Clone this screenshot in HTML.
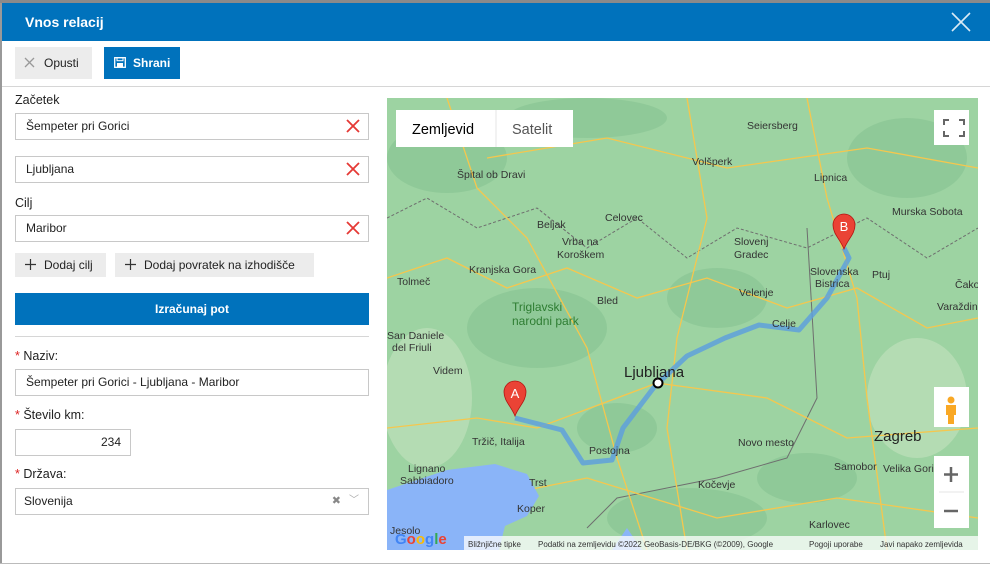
<!DOCTYPE html>
<html><head><meta charset="utf-8"><style>
*{box-sizing:border-box;margin:0;padding:0}
body{width:990px;height:567px;background:#fff;font-family:"Liberation Sans","DejaVu Sans",sans-serif;font-size:12px;color:#222;position:relative;overflow:hidden}
.top{position:absolute;left:0;top:0;width:990px;height:3px;background:#8a8a8a}
.hdr{position:absolute;left:2px;top:3px;width:988px;height:38px;background:#0072bc;color:#fff;font-weight:bold;font-size:14px;line-height:38px;padding-left:23px}
.lb{position:absolute;left:0;top:3px;width:2px;height:564px;background:#999}
.btn{position:absolute;height:32px;line-height:32px;font-size:12px}
.inp{position:absolute;left:15px;width:354px;height:27px;border:1px solid #c8c8c8;padding-left:10px;line-height:25px;font-size:12px;background:#fff}
.x{position:absolute;right:8px;top:5px;width:14px;height:14px}
.lbl{position:absolute;left:15px;font-size:12.5px}
.req{color:#d22}
.gbtn{position:absolute;top:253px;height:24px;line-height:24px;background:#ececec;padding:0 10px;font-size:12px}
.map{position:absolute;left:387px;top:98px;width:591px;height:452px;overflow:hidden;background:#9fd5a3}
</style></head><body>
<div class="top"></div>
<div class="lb"></div>
<div class="hdr">Vnos relacij</div>
<svg style="position:absolute;left:950px;top:11px" width="22" height="22"><path d="M2 2L20 20M20 2L2 20" stroke="#fff" stroke-width="1.6" opacity=".85"/></svg>
<div class="btn" style="left:15px;top:47px;width:77px;background:#ececec;padding-left:29px">Opusti</div>
<svg style="position:absolute;left:24px;top:57px" width="11" height="11"><path d="M1 1L10 10M10 1L1 10" stroke="#999" stroke-width="1.3"/></svg>
<div class="btn" style="left:104px;top:47px;width:76px;background:#0072bc;color:#fff;padding-left:29px;font-weight:bold">Shrani</div>
<svg style="position:absolute;left:114px;top:57px" width="12" height="11"><rect x=".7" y=".7" width="10.6" height="9.6" fill="none" stroke="#fff" stroke-width="1.3"/><rect x="3" y=".7" width="6" height="3" fill="none" stroke="#fff" stroke-width="1"/><rect x="3" y="6" width="6" height="4.3" fill="#fff"/></svg>
<div style="position:absolute;left:2px;top:86px;width:988px;height:1px;background:#d6d6d6"></div>
<div class="lbl" style="top:93px">Začetek</div>
<div class="inp" style="top:113px">Šempeter pri Gorici<svg class="x" viewBox="0 0 14 14"><path d="M1 1L13 13M13 1L1 13" stroke="#e53935" stroke-width="1.8"/></svg></div>
<div class="inp" style="top:156px">Ljubljana<svg class="x" viewBox="0 0 14 14"><path d="M1 1L13 13M13 1L1 13" stroke="#e53935" stroke-width="1.8"/></svg></div>
<div class="lbl" style="top:196px">Cilj</div>
<div class="inp" style="top:215px">Maribor<svg class="x" viewBox="0 0 14 14"><path d="M1 1L13 13M13 1L1 13" stroke="#e53935" stroke-width="1.8"/></svg></div>
<div class="gbtn" style="left:15px;width:91px;padding-left:29px">Dodaj cilj</div>
<div class="gbtn" style="left:115px;width:199px;padding-left:29px">Dodaj povratek na izhodišče</div>
<svg style="position:absolute;left:25px;top:259px" width="11" height="11"><path d="M5.5 0V11M0 5.5H11" stroke="#333" stroke-width="1.2"/></svg>
<svg style="position:absolute;left:125px;top:259px" width="11" height="11"><path d="M5.5 0V11M0 5.5H11" stroke="#333" stroke-width="1.2"/></svg>
<div style="position:absolute;left:15px;top:293px;width:354px;height:32px;background:#0072bc;color:#fff;font-weight:bold;text-align:center;line-height:32px">Izračunaj pot</div>
<div style="position:absolute;left:15px;top:336px;width:354px;height:1px;background:#d6d6d6"></div>
<div class="lbl" style="top:349px"><span class="req">*</span> Naziv:</div>
<div class="inp" style="top:369px">Šempeter pri Gorici - Ljubljana - Maribor</div>
<div class="lbl" style="top:408px"><span class="req">*</span> Število km:</div>
<div class="inp" style="top:429px;width:116px;text-align:right;padding-right:9px">234</div>
<div class="lbl" style="top:467px"><span class="req">*</span> Država:</div>
<div class="inp" style="top:488px;padding-left:8px">Slovenija<span style="position:absolute;right:27px;top:0;color:#888;font-size:11px">✖</span><span style="position:absolute;right:9px;top:-1px;color:#aaa;font-size:10px">﹀</span></div>
<div style="position:absolute;left:0;top:563px;width:990px;height:4px;background:#fff;border-top:1px solid #bbb"></div>

<div class="map">
<svg width="591" height="452" style="position:absolute;left:0;top:0" font-family="Liberation Sans,sans-serif">
<rect width="591" height="452" fill="#9dd3a2"/>
<g fill="#8cc796" opacity=".8">
<ellipse cx="60" cy="60" rx="60" ry="35"/><ellipse cx="200" cy="20" rx="80" ry="20"/><ellipse cx="150" cy="230" rx="70" ry="40"/>
<ellipse cx="330" cy="200" rx="50" ry="30"/><ellipse cx="300" cy="420" rx="80" ry="30"/><ellipse cx="520" cy="60" rx="60" ry="40"/>
<ellipse cx="230" cy="330" rx="40" ry="25"/><ellipse cx="420" cy="380" rx="50" ry="25"/>
</g>
<g fill="#b7ddb5" opacity=".9"><ellipse cx="40" cy="300" rx="45" ry="70"/><ellipse cx="530" cy="300" rx="50" ry="60"/></g>
<path d="M0 120L40 100L90 130L150 110L200 150L250 120L300 160L350 130L420 150L480 120L540 160L591 130" stroke="#6e6e6e" stroke-width="1" fill="none" stroke-dasharray="3 2"/>
<path d="M420 130L430 300L400 360L330 380L230 400L200 430" stroke="#6e6e6e" stroke-width="1" fill="none"/>
<path d="M0 180L60 160L120 190L180 170L250 200L320 180L400 210L470 190L540 230L591 220" stroke="#f5c74e" stroke-width="1.3" fill="none"/>
<path d="M0 330L90 320L150 330L270 285L380 300L460 340L591 330" stroke="#f5c74e" stroke-width="1.3" fill="none"/>
<path d="M60 0L90 90L140 140L200 250L230 360L260 452" stroke="#f5c74e" stroke-width="1.3" fill="none"/>
<path d="M300 0L320 120L290 240L280 330L300 452" stroke="#f5c74e" stroke-width="1.3" fill="none"/>
<path d="M420 0L440 100L470 200L480 300L500 452" stroke="#f5c74e" stroke-width="1.3" fill="none"/>
<path d="M100 60L220 40L340 70L480 50L591 70" stroke="#f5c74e" stroke-width="1.3" fill="none"/>
<path d="M100 400L200 380L330 420L450 400L591 420" stroke="#f5c74e" stroke-width="1.3" fill="none"/>
<path d="M0 392L60 372L108 366L140 376L152 398L140 418L118 428L112 452L0 452Z" fill="#8ab4f8"/>
<path d="M225 452L240 430L255 452Z" fill="#8ab4f8"/>
<path d="M128 320L175 332L196 365L225 362L236 330L268 288L300 258L338 240L372 227L412 232L440 200L462 160L457 150" stroke="#5b9de0" stroke-width="5" fill="none" opacity=".8" stroke-linejoin="round"/>
<circle cx="271" cy="285" r="4.5" fill="#fff" stroke="#000" stroke-width="2"/>
<path d="M128 318C124 308 117 303 117 294A11 11 0 0 1 139 294C139 303 132 308 128 318Z" fill="#ea4335" stroke="#b31412" stroke-width=".8"/>
<text x="128" y="300" fill="#fff" font-size="13" text-anchor="middle">A</text>
<path d="M457 151C453 141 446 136 446 127A11 11 0 0 1 468 127C468 136 461 141 457 151Z" fill="#ea4335" stroke="#b31412" stroke-width=".8"/>
<text x="457" y="133" fill="#fff" font-size="13" text-anchor="middle">B</text>
<g font-size="10.5" fill="#333">
<text x="70" y="80">Špital ob Dravi</text>
<text x="150" y="130">Beljak</text>
<text x="218" y="123">Celovec</text>
<text x="305" y="67">Volšperk</text>
<text x="360" y="31">Seiersberg</text>
<text x="427" y="83">Lipnica</text>
<text x="505" y="117">Murska Sobota</text>
<text x="175" y="147">Vrba na</text><text x="170" y="160">Koroškem</text>
<text x="82" y="175">Kranjska Gora</text>
<text x="10" y="187">Tolmeč</text>
<text x="347" y="147">Slovenj</text><text x="347" y="160">Gradec</text>
<text x="423" y="177">Slovenska</text><text x="428" y="189">Bistrica</text>
<text x="485" y="180">Ptuj</text>
<text x="568" y="190">Čako</text>
<text x="550" y="212">Varaždin</text>
<text x="352" y="198">Velenje</text>
<text x="385" y="229">Celje</text>
<text x="210" y="206">Bled</text>
<text x="0" y="241">San Daniele</text><text x="5" y="253">del Friuli</text>
<text x="46" y="276">Videm</text>
<text x="85" y="347">Tržič, Italija</text>
<text x="202" y="356">Postojna</text>
<text x="351" y="348">Novo mesto</text>
<text x="21" y="374">Lignano</text><text x="13" y="386">Sabbiadoro</text>
<text x="447" y="372">Samobor</text>
<text x="496" y="374">Velika Gori</text>
<text x="142" y="388">Trst</text>
<text x="130" y="414">Koper</text>
<text x="311" y="390">Kočevje</text>
<text x="422" y="430">Karlovec</text>
<text x="3" y="436">Jesolo</text>
</g>
<text x="125" y="213" font-size="12" fill="#2e7d32">Triglavski</text>
<text x="125" y="227" font-size="12" fill="#2e7d32">narodni park</text>
<text x="237" y="279" font-size="15" fill="#222">Ljubljana</text>
<text x="487" y="343" font-size="15" fill="#222">Zagreb</text>
<text x="246" y="469" font-size="13" fill="#222">Reka</text>
<rect x="9" y="12" width="177" height="37" fill="#fff"/>
<line x1="109" y1="12" x2="109" y2="49" stroke="#e6e6e6"/>
<text x="25" y="36" font-size="14.5" fill="#000">Zemljevid</text>
<text x="125" y="36" font-size="14.5" fill="#555">Satelit</text>
<rect x="547" y="12" width="35" height="35" fill="#fff"/>
<path d="M557 27V22H562M572 22H577V27M577 33V38H572M562 38H557V33" stroke="#666" stroke-width="2" fill="none"/>
<rect x="547" y="289" width="35" height="40" fill="#fff"/>
<circle cx="564" cy="302" r="3.5" fill="#f9a825"/><path d="M559 307H569V317H567V326H561V317H559Z" fill="#f9a825"/>
<rect x="547" y="358" width="35" height="72" fill="#fff"/>
<line x1="552" y1="394" x2="577" y2="394" stroke="#e6e6e6"/>
<path d="M564 369V384M557 376.5H571" stroke="#666" stroke-width="2.5"/>
<path d="M557 413H571" stroke="#666" stroke-width="2.5"/>
<text x="8" y="446" font-size="15" font-weight="bold" fill="#4285f4">G<tspan fill="#ea4335">o</tspan><tspan fill="#fbbc05">o</tspan><tspan fill="#4285f4">g</tspan><tspan fill="#34a853">l</tspan><tspan fill="#ea4335">e</tspan></text>
<rect x="77" y="438" width="514" height="14" fill="#fff" opacity=".75"/>
<g font-size="8" fill="#333"><text x="81" y="449">Bližnjične tipke</text><text x="151" y="449">Podatki na zemljevidu ©2022 GeoBasis-DE/BKG (©2009), Google</text><text x="422" y="449">Pogoji uporabe</text><text x="493" y="449">Javi napako zemljevida</text></g>
</svg>
</div>
</body></html>
